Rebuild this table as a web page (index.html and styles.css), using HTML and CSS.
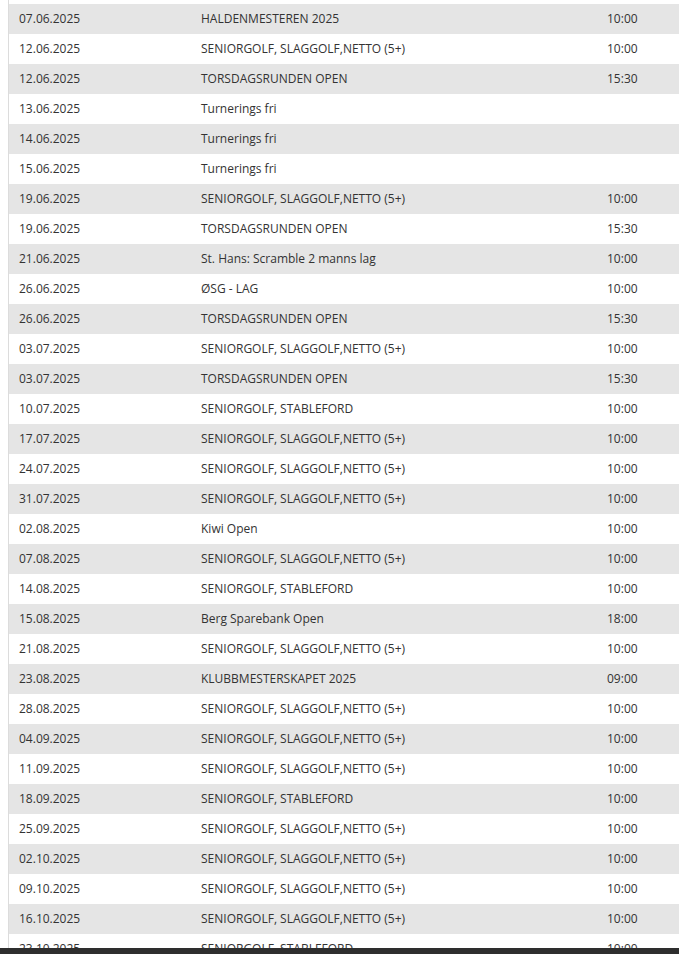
FILE: index.html
```html
<!DOCTYPE html>
<html lang="no">
<head>
<meta charset="utf-8">
<title>Terminliste</title>
<link rel="stylesheet" href="styles.css">
</head>
<body>
<div class="wrap">
<table class="events">
<tbody>
<tr><td>07.06.2025</td><td>HALDENMESTEREN 2025</td><td>10:00</td></tr>
<tr><td>12.06.2025</td><td>SENIORGOLF, SLAGGOLF,NETTO (5+)</td><td>10:00</td></tr>
<tr><td>12.06.2025</td><td>TORSDAGSRUNDEN OPEN</td><td>15:30</td></tr>
<tr><td>13.06.2025</td><td>Turnerings fri</td><td></td></tr>
<tr><td>14.06.2025</td><td>Turnerings fri</td><td></td></tr>
<tr><td>15.06.2025</td><td>Turnerings fri</td><td></td></tr>
<tr><td>19.06.2025</td><td>SENIORGOLF, SLAGGOLF,NETTO (5+)</td><td>10:00</td></tr>
<tr><td>19.06.2025</td><td>TORSDAGSRUNDEN OPEN</td><td>15:30</td></tr>
<tr><td>21.06.2025</td><td>St. Hans: Scramble 2 manns lag</td><td>10:00</td></tr>
<tr><td>26.06.2025</td><td>ØSG - LAG</td><td>10:00</td></tr>
<tr><td>26.06.2025</td><td>TORSDAGSRUNDEN OPEN</td><td>15:30</td></tr>
<tr><td>03.07.2025</td><td>SENIORGOLF, SLAGGOLF,NETTO (5+)</td><td>10:00</td></tr>
<tr><td>03.07.2025</td><td>TORSDAGSRUNDEN OPEN</td><td>15:30</td></tr>
<tr><td>10.07.2025</td><td>SENIORGOLF, STABLEFORD</td><td>10:00</td></tr>
<tr><td>17.07.2025</td><td>SENIORGOLF, SLAGGOLF,NETTO (5+)</td><td>10:00</td></tr>
<tr><td>24.07.2025</td><td>SENIORGOLF, SLAGGOLF,NETTO (5+)</td><td>10:00</td></tr>
<tr><td>31.07.2025</td><td>SENIORGOLF, SLAGGOLF,NETTO (5+)</td><td>10:00</td></tr>
<tr><td>02.08.2025</td><td>Kiwi Open</td><td>10:00</td></tr>
<tr><td>07.08.2025</td><td>SENIORGOLF, SLAGGOLF,NETTO (5+)</td><td>10:00</td></tr>
<tr><td>14.08.2025</td><td>SENIORGOLF, STABLEFORD</td><td>10:00</td></tr>
<tr><td>15.08.2025</td><td>Berg Sparebank Open</td><td>18:00</td></tr>
<tr><td>21.08.2025</td><td>SENIORGOLF, SLAGGOLF,NETTO (5+)</td><td>10:00</td></tr>
<tr><td>23.08.2025</td><td>KLUBBMESTERSKAPET 2025</td><td>09:00</td></tr>
<tr><td>28.08.2025</td><td>SENIORGOLF, SLAGGOLF,NETTO (5+)</td><td>10:00</td></tr>
<tr><td>04.09.2025</td><td>SENIORGOLF, SLAGGOLF,NETTO (5+)</td><td>10:00</td></tr>
<tr><td>11.09.2025</td><td>SENIORGOLF, SLAGGOLF,NETTO (5+)</td><td>10:00</td></tr>
<tr><td>18.09.2025</td><td>SENIORGOLF, STABLEFORD</td><td>10:00</td></tr>
<tr><td>25.09.2025</td><td>SENIORGOLF, SLAGGOLF,NETTO (5+)</td><td>10:00</td></tr>
<tr><td>02.10.2025</td><td>SENIORGOLF, SLAGGOLF,NETTO (5+)</td><td>10:00</td></tr>
<tr><td>09.10.2025</td><td>SENIORGOLF, SLAGGOLF,NETTO (5+)</td><td>10:00</td></tr>
<tr><td>16.10.2025</td><td>SENIORGOLF, SLAGGOLF,NETTO (5+)</td><td>10:00</td></tr>
<tr><td>23.10.2025</td><td>SENIORGOLF, STABLEFORD</td><td>10:00</td></tr>
</tbody>
</table>
</div>
<div class="hbar"></div>
</body>
</html>
```
FILE: styles.css
```css
html, body {
  margin: 0;
  padding: 0;
  background: #fff;
  overflow: hidden;
}
body {
  font-family: "Open Sans", "Liberation Sans", sans-serif;
  font-size: 12px;
  color: #333;
}
.wrap {
  margin-left: 8px;
  padding-top: 4px;
  border-left: 1px solid #dcdcdc;
}
.events {
  width: 100%;
  border-collapse: collapse;
  table-layout: fixed;
}
.events td {
  height: 30px;
  padding: 0 10px 2px;
  box-sizing: border-box;
  vertical-align: middle;
  white-space: nowrap;
}
.events td:nth-child(1) { width: 182px; }
.events td:nth-child(2) { width: 406px; }
.events tr:nth-child(odd) td { background: #e5e5e5; }
.hbar {
  position: fixed;
  left: 0;
  right: 0;
  bottom: 0;
  height: 6px;
  background: #2e2e2e;
}
```
